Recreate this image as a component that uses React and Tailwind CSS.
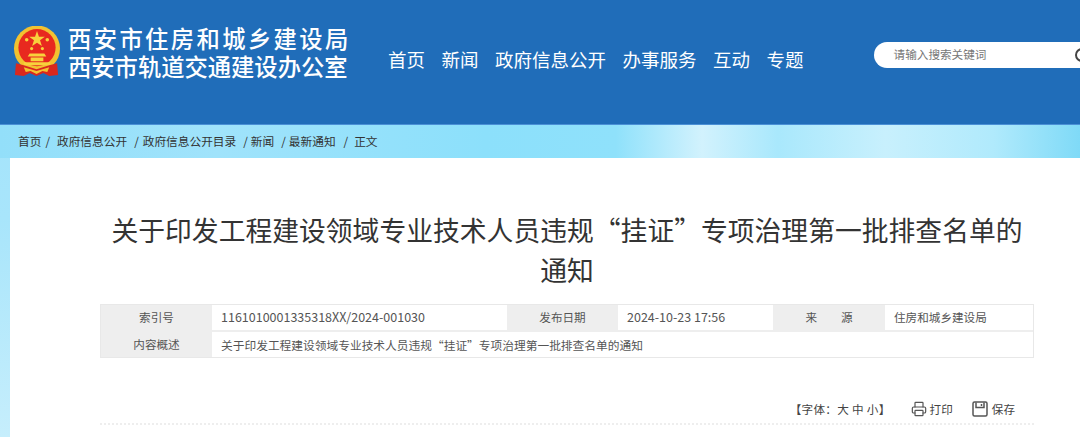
import React from 'react';
import { Printer } from 'lucide-react';

const cjk = { fontFamily: '"Noto Sans CJK SC", sans-serif' };

const navItems = ['首页', '新闻', '政府信息公开', '办事服务', '互动', '专题'];

const Emblem = () => (
    <svg width="48" height="52" viewBox="0 0 49 53" className="shrink-0 mt-[2px]">
        <circle cx="24.5" cy="23" r="23.5" fill="#f2c230" />
        <circle cx="24.5" cy="22" r="19" fill="#e8291f" />
        <polygon points="24.5,5 26.5,11 32.5,11 27.6,14.6 29.5,20.5 24.5,17 19.5,20.5 21.4,14.6 16.5,11 22.5,11" fill="#f8d23c" />
        <circle cx="14" cy="14" r="1.8" fill="#f8d23c" />
        <circle cx="35" cy="14" r="1.8" fill="#f8d23c" />
        <circle cx="19" cy="23" r="1.6" fill="#f8d23c" />
        <circle cx="30" cy="23" r="1.6" fill="#f8d23c" />
        <path d="M15 31h19l-2-3h-15zM18 32h13v4h-13zM11 37h27v3h-27z" fill="#f8d23c" />
        <path d="M3 38l8 2 13 4 13-4 8-2 1 12-9 1-6-3-7 3-7-3-6 3-9-1z" fill="#d9281e" />
        <path d="M11 42l13 4 13-4-2 5-5-1-6 3-6-3-5 1z" fill="#f2c230" />
    </svg>
);

const Header = () => (
    <div className="h-[125px] bg-[#206db9] border-b border-[#4a90d6] overflow-hidden">
        <div className="flex items-start pt-[24px] pl-[13px]">
            <Emblem />
            <div className="ml-[7px] w-[280px] shrink-0 text-white font-medium text-[23.3px] leading-[28px]" style={cjk}>
                <div className="tracking-[2.4px] whitespace-nowrap">西安市住房和城乡建设局</div>
                <div className="whitespace-nowrap">西安市轨道交通建设办公室</div>
            </div>
            <div className="ml-[40px] mt-[20px] flex shrink-0 gap-[16.5px] text-white text-[18.5px] leading-[30px]" style={cjk}>
                {navItems.map((item) => (
                    <span key={item} className="whitespace-nowrap">{item}</span>
                ))}
            </div>
            <div className="ml-[70px] mt-[18px] w-[300px] h-[26px] shrink-0 bg-white rounded-l-full flex items-center pl-[20px] text-[11.6px] text-[#777]" style={cjk}>
                <span className="whitespace-nowrap">请输入搜索关键词</span>
                <span className="ml-[89px] w-[14px] h-[14px] shrink-0 rounded-full border-2 border-[#444]"></span>
            </div>
        </div>
    </div>
);

const Breadcrumb = () => (
    <div className="h-[33px] flex items-center pl-[18px] pb-[2px] text-[11.7px] text-[#333] whitespace-nowrap bg-[linear-gradient(90deg,#93dffa_0%,#a0e3fb_20%,#8ce0fb_45%,#8fe1fb_57%,#d2f2fd_65%,#a9e8fc_72%,#c8f0fd_82%,#b0eafc_92%,#7fdaf7_100%)]" style={cjk}>
        <span>首页</span>
        <span className="ml-[4px]">/</span>
        <span className="ml-[7px]">政府信息公开</span>
        <span className="ml-[7px]">/</span>
        <span className="ml-[4px]">政府信息公开目录</span>
        <span className="ml-[7px]">/</span>
        <span className="ml-[3px]">新闻</span>
        <span className="ml-[7px]">/</span>
        <span className="ml-[3px]">最新通知</span>
        <span className="ml-[8px]">/</span>
        <span className="ml-[6px]">正文</span>
    </div>
);

const labelCls = 'bg-[#eeeeee] flex items-center justify-center text-[11.6px] text-[#555]';
const valueCls = 'flex items-center pl-[9px] bg-white whitespace-nowrap';

const MetaTable = () => (
    <div className="ml-[90px] mr-[46px] mt-[14px] border border-[#e8e8e8] text-[11.6px] text-[#555]" style={cjk}>
        <div className="grid grid-cols-[111px_295px_111px_155px_112px_1fr] h-[27px] border-b-2 border-[#eeeeee]">
            <div className={labelCls}>索引号</div>
            <div className={`${valueCls} text-[12.5px]`}>1161010001335318XX/2024-001030</div>
            <div className={labelCls}>发布日期</div>
            <div className={`${valueCls} text-[12.5px]`}>2024-10-23 17:56</div>
            <div className={labelCls}><span className="mr-[12px]">来</span><span className="ml-[12px]">源</span></div>
            <div className={valueCls}>住房和城乡建设局</div>
        </div>
        <div className="grid grid-cols-[111px_1fr] h-[25px]">
            <div className={labelCls}>内容概述</div>
            <div className={`${valueCls} text-[11.72px]`}>关于印发工程建设领域专业技术人员违规“挂证”专项治理第一批排查名单的通知</div>
        </div>
    </div>
);

const SaveIcon = () => (
    <svg width="16" height="16" viewBox="0 0 16 16" fill="none" stroke="#555" strokeWidth="1.5" className="shrink-0 mt-[1px]">
        <rect x="1" y="1" width="14" height="14" rx="1.5" />
        <path d="M4 1.5v5h8v-5" />
        <path d="M9.5 3v2" />
    </svg>
);

const Tools = () => (
    <div className="ml-[90px] mr-[46px] mt-[42px] h-[25px] border-b-2 border-dotted border-[#eeeeee] flex justify-end pr-[19px] text-[11.6px] text-[#444]" style={cjk}>
        <div className="flex items-start leading-[18px]">
            <span className="mr-[20px] tracking-[0.3px] whitespace-nowrap">【字体：大 中 小】</span>
            <Printer size={16} strokeWidth={1.8} className="shrink-0 text-[#555] mt-[1px]" />
            <span className="ml-[3px] mr-[19px] whitespace-nowrap">打印</span>
            <SaveIcon />
            <span className="ml-[4px] whitespace-nowrap">保存</span>
        </div>
    </div>
);

export default function App() {
    return (
        <div className="w-[1080px] h-[437px] overflow-hidden bg-[linear-gradient(180deg,#a0e3fb_0%,#a8e5fb_50%,#c6eefc_100%)]">
            <Header />
            <Breadcrumb />
            <div className="ml-[10px] h-[279px] bg-white pt-[52px]">
                <h1 className="ml-[90px] mr-[46px] text-center text-[26.8px] leading-[40px] text-[#333] font-normal" style={cjk}>
                    关于印发工程建设领域专业技术人员违规“挂证”专项治理第一批排查名单的通知
                </h1>
                <MetaTable />
                <Tools />
            </div>
        </div>
    );
}
